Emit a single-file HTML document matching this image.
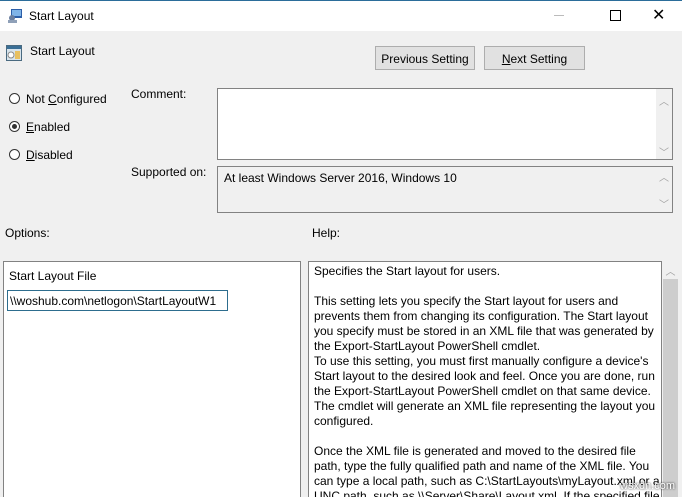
<!DOCTYPE html>
<html style="overflow:hidden;width:682px;height:497px"><head><style>
body{margin:0;width:682px;height:497px;overflow:hidden;background:#f0f0f0;font-family:"Liberation Sans",sans-serif;font-size:12px;color:#000;position:relative}
.a{position:absolute}
.title{left:0;top:0;width:682px;height:31px;background:#fff;border-top:1px solid #2b6d9a;box-sizing:border-box}
.btn{background:#e1e1e1;border:1px solid #adadad;height:24px;line-height:24px;text-align:center;box-sizing:border-box}
.box{background:#fff;border:1px solid #828282;box-sizing:border-box;overflow:hidden}
.sb{background:#f0f0f0;color:#a0a0a0;font-size:10px;text-align:center}
.radio{width:11px;height:11px;border:1px solid #333;border-radius:50%;box-sizing:border-box;background:#fff}
u{text-decoration:underline}
</style></head><body>
<div class="a title"></div>
<svg class="a" style="left:7px;top:8px" width="16" height="16"><rect x="4" y="1" width="11" height="9" fill="#2c5fa8"/><rect x="5" y="2" width="9" height="6" fill="#7fb4e8"/><circle cx="5" cy="10" r="3" fill="#6a7fa0"/><rect x="1" y="12" width="9" height="3" fill="#8fa0b8"/></svg>
<div class="a" style="left:29px;top:9px">Start Layout</div>
<div class="a" style="left:554px;top:15px;width:10px;height:1px;background:#bbb"></div>
<div class="a" style="left:610px;top:10px;width:9px;height:9px;border:1px solid #000"></div>
<div class="a" style="left:652px;top:5px;font-size:16px">✕</div>
<svg class="a" style="left:6px;top:45px" width="16" height="16"><rect x="0.5" y="0.5" width="15" height="15" fill="#d8e4ec" stroke="#4a6a80"/><rect x="1" y="1" width="14" height="3" fill="#3a6f96"/><circle cx="5" cy="10" r="3" fill="#fff" stroke="#888"/><rect x="9" y="6" width="5" height="8" fill="#e8c060"/></svg>
<div class="a" style="left:30px;top:44px">Start Layout</div>
<div class="a btn" style="left:375px;top:46px;width:100px">Previous Setting</div>
<div class="a btn" style="left:484px;top:46px;width:101px"><u>N</u>ext Setting</div>
<div class="a radio" style="left:9px;top:93px"></div><div class="a" style="left:26px;top:92px">Not <u>C</u>onfigured</div>
<div class="a radio" style="left:9px;top:121px"></div><div class="a" style="left:12px;top:124px;width:5px;height:5px;border-radius:50%;background:#333"></div><div class="a" style="left:26px;top:120px"><u>E</u>nabled</div>
<div class="a radio" style="left:9px;top:149px"></div><div class="a" style="left:26px;top:148px"><u>D</u>isabled</div>
<div class="a" style="left:131px;top:87px">Comment:</div>
<div class="a box" style="left:217px;top:88px;width:456px;height:72px"><div class="a sb" style="right:0;top:0;width:16px;height:70px"><div style="margin-top:4px">︿</div><div style="margin-top:36px">﹀</div></div></div>
<div class="a" style="left:131px;top:165px">Supported on:</div>
<div class="a box" style="left:217px;top:166px;width:456px;height:47px;background:#f0f0f0"><div class="a" style="left:6px;top:4px">At least Windows Server 2016, Windows 10</div><div class="a sb" style="right:0;top:0;width:16px;height:45px"><div style="margin-top:2px">︿</div><div style="margin-top:12px">﹀</div></div></div>
<div class="a" style="left:5px;top:226px">Options:</div>
<div class="a" style="left:312px;top:226px">Help:</div>
<div class="a box" style="left:3px;top:261px;width:298px;height:236px;border-bottom:none">
<div class="a" style="left:5px;top:7px">Start Layout File</div>
<div class="a" style="left:3px;top:28px;width:221px;height:21px;border:1px solid #2d6d8e;box-sizing:border-box;padding:3px 2px;white-space:nowrap;overflow:hidden">\\woshub.com\netlogon\StartLayoutW1</div>
</div>
<div class="a box" style="left:308px;top:261px;width:354px;height:236px;border-bottom:none">
<div class="a" style="left:5px;top:2px;width:348px;line-height:15px">Specifies the Start layout for users.<br><br>This setting lets you specify the Start layout for users and prevents them from changing its configuration. The Start layout you specify must be stored in an XML file that was generated by the Export-StartLayout PowerShell cmdlet.<br>To use this setting, you must first manually configure a device's Start layout to the desired look and feel. Once you are done, run the Export-StartLayout PowerShell cmdlet on that same device. The cmdlet will generate an XML file representing the layout you configured.<br><br>Once the XML file is generated and moved to the desired file path, type the fully qualified path and name of the XML file. You can type a local path, such as C:\StartLayouts\myLayout.xml&nbsp;or&nbsp;a UNC path, such as \\Server\Share\Layout.xml. If the specified file</div>
</div>
<div class="a" style="left:662px;top:261px;width:17px;height:236px;background:#f0f0f0"><div class="a sb" style="left:0;top:2px;width:17px">︿</div><div class="a" style="left:1px;top:18px;width:15px;height:218px;background:#cdcdcd"></div></div>
<div class="a" style="left:620px;top:480px;color:#fff;font-size:11px;text-shadow:0 0 2px #000">wsxdn.com</div>
</body></html>
